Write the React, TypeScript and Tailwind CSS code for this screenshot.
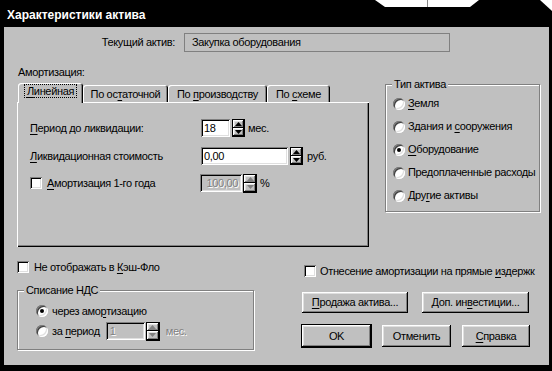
import React from "react";

const raised =
  "shadow-[inset_-1px_-1px_0_#000000,inset_1px_1px_0_#ffffff,inset_-2px_-2px_0_#808080,inset_2px_2px_0_#dfdfdf]";
const sunken =
  "shadow-[inset_1px_1px_0_#808080,inset_-1px_-1px_0_#ffffff,inset_2px_2px_0_#000000,inset_-2px_-2px_0_#dfdfdf]";

const U = ({ children }: { children: React.ReactNode }) => (
  <span className="underline decoration-1 underline-offset-[2px]">{children}</span>
);

function Tri({ up, disabled }: { up?: boolean; disabled?: boolean }) {
  return (
    <svg width="7" height="4" viewBox="0 0 7 4">
      <polygon
        points={up ? "0,4 3.5,0 7,4" : "0,0 3.5,4 7,0"}
        fill={disabled ? "#808080" : "#000000"}
      />
    </svg>
  );
}

function Spin({ w, h, disabled }: { w: string; h: string; disabled?: boolean }) {
  return (
    <div className={`${w} ${h} flex flex-col border border-black`}>
      <div className={`flex-1 bg-[#c0c0c0] flex items-center justify-center ${raised}`}>
        <Tri up disabled={disabled} />
      </div>
      <div className={`flex-1 bg-[#c0c0c0] flex items-center justify-center ${raised}`}>
        <Tri disabled={disabled} />
      </div>
    </div>
  );
}

function Check() {
  return <div className={`w-[12px] h-[12px] shrink-0 bg-white ${sunken}`} />;
}

function Radio({ on }: { on?: boolean }) {
  return (
    <div className="w-[12px] h-[12px] shrink-0 rounded-full bg-white shadow-[inset_1px_1px_0_#808080,inset_-1px_-1px_0_#ffffff,inset_2px_2px_0_#404040,inset_-2px_-2px_0_#dfdfdf] flex items-center justify-center">
      {on && <div className="w-[4px] h-[4px] rounded-full bg-black" />}
    </div>
  );
}

function Btn({ w, h, children, def }: { w: string; h: string; children: React.ReactNode; def?: boolean }) {
  return (
    <div
      className={`${w} ${h} bg-[#c0c0c0] flex items-center justify-center ${raised} ${
        def ? "outline outline-1 outline-black" : ""
      }`}
    >
      {children}
    </div>
  );
}

function Tab({ w, sel, children }: { w: string; sel?: boolean; children: React.ReactNode }) {
  return (
    <div
      className={`${w} ${
        sel ? "h-[20px] relative z-10" : "h-[18px]"
      } bg-[#c0c0c0] rounded-t-[3px] shadow-[inset_1px_1px_0_#ffffff,inset_-1px_0_0_#000000,inset_-2px_0_0_#808080] flex items-start justify-center pt-[2px]`}
    >
      {children}
    </div>
  );
}

export default function App() {
  return (
    <div className="w-[552px] h-[371px] bg-black overflow-hidden relative flex flex-col font-['Liberation_Sans',Arial,sans-serif]">
      <svg className="absolute left-0 top-0" width="552" height="12" viewBox="0 0 552 12">
        <polygon points="375,0 385,7 470,7 479,0" fill="#ffffff" />
        <line x1="427.5" y1="0" x2="427.5" y2="7" stroke="#888888" strokeWidth="1" />
        <polygon points="540,0 552,0 552,11" fill="#ffffff" />
      </svg>
      <div className="h-[27px] shrink-0 pl-[7px] pt-[3px] flex items-center text-white font-bold text-[12px]">
        Характеристики актива
      </div>
      <div className="ml-[4px] w-[545px] h-[338px] bg-[#c0c0c0] text-[11px] leading-[13px] tracking-[-0.35px] text-black pt-[6px]">
        {/* Current asset */}
        <div className="flex items-center h-[19px]">
          <div className="w-[171px] text-right">Текущий актив:</div>
          <div className="ml-[9px] w-[266px] h-[19px] border border-[#808080] flex items-center pl-[7px]">
            Закупка оборудования
          </div>
        </div>

        {/* Amortization + type */}
        <div className="flex mt-[14px]">
          <div className="ml-[13px] w-[352px] flex flex-col">
            <div className="h-[13px] pl-[1px]">Амортизация:</div>
            <div className="mt-[4px] h-[20px] flex items-end pl-[1px]">
              <Tab w="w-[65px]" sel>
                <span className="outline outline-1 outline-dotted outline-black px-[2px] leading-[12px]">
                  <U>Л</U>инейная
                </span>
              </Tab>
              <Tab w="w-[85px]">
                <span className="mt-[1px]">
                  По ос<U>т</U>аточной
                </span>
              </Tab>
              <Tab w="w-[99px]">
                <span className="mt-[1px]">
                  По <U>п</U>роизводству
                </span>
              </Tab>
              <Tab w="w-[63px]">
                <span className="mt-[1px]">
                  По <U>с</U>хеме
                </span>
              </Tab>
            </div>
            <div className="-mt-[1px] h-[145px] w-[352px] bg-[#c0c0c0] shadow-[inset_1px_1px_0_#ffffff,inset_-1px_-1px_0_#000000,inset_-2px_-2px_0_#808080] pt-[17px] pl-[13px]">
              <div className="flex items-center h-[18px]">
                <div className="w-[171px]">
                  <U>П</U>ериод до ликвидации:
                </div>
                <div className={`w-[29px] h-[18px] bg-white ${sunken} flex items-center pl-[3px]`}>18</div>
                <div className="ml-[2px]">
                  <Spin w="w-[13px]" h="h-[18px]" />
                </div>
                <div className="ml-[3px]">мес.</div>
              </div>
              <div className="flex items-center h-[18px] mt-[10px]">
                <div className="w-[171px]">
                  <U>Л</U>иквидационная стоимость
                </div>
                <div className={`w-[87px] h-[18px] bg-white ${sunken} flex items-center pl-[3px]`}>0,00</div>
                <div className="ml-[2px]">
                  <Spin w="w-[13px]" h="h-[18px]" />
                </div>
                <div className="ml-[4px]">руб.</div>
              </div>
              <div className="flex items-center h-[18px] mt-[9px]">
                <div className="w-[170px] flex items-center">
                  <Check />
                  <div className="ml-[5px]">
                    <U>А</U>мортизация 1-го года
                  </div>
                </div>
                <div
                  className={`w-[42px] h-[18px] bg-[#c0c0c0] ${sunken} flex items-center justify-end pr-[4px] text-[#808080] [text-shadow:1px_1px_0_#ffffff]`}
                >
                  100,00
                </div>
                <div className="ml-[1px]">
                  <Spin w="w-[14px]" h="h-[19px]" disabled />
                </div>
                <div className="ml-[3px]">%</div>
              </div>
            </div>
          </div>

          <div className="ml-[16px] mt-[18px] w-[155px] h-[128px] relative border border-[#808080] shadow-[1px_1px_0_#ffffff,inset_1px_1px_0_#ffffff] pt-[7px] pl-[7px]">
            <div className="absolute left-[6px] -top-[7px] px-[2px] bg-[#c0c0c0]">Тип актива</div>
            <div className="flex items-center h-[23px]">
              <Radio />
              <div className="ml-[3px]">
                <U>З</U>емля
              </div>
            </div>
            <div className="flex items-center h-[23px]">
              <Radio />
              <div className="ml-[3px]">
                Здания и <U>с</U>ооружения
              </div>
            </div>
            <div className="flex items-center h-[23px]">
              <Radio on />
              <div className="ml-[3px]">
                <U>О</U>борудование
              </div>
            </div>
            <div className="flex items-center h-[23px]">
              <Radio />
              <div className="ml-[3px] whitespace-nowrap">Предоплаченные расходы</div>
            </div>
            <div className="flex items-center h-[23px]">
              <Radio />
              <div className="ml-[3px]">
                Дру<U>г</U>ие активы
              </div>
            </div>
          </div>
        </div>

        {/* Bottom */}
        <div className="flex items-start">
          <div className="ml-[13px] mt-[14px] w-[237px] flex flex-col">
            <div className="flex items-center h-[12px]">
              <Check />
              <div className="ml-[5px]">
                Не отображать в <U>К</U>эш-Фло
              </div>
            </div>
            <div className="mt-[17px] h-[60px] w-[237px] relative border border-[#808080] shadow-[1px_1px_0_#ffffff,inset_1px_1px_0_#ffffff] pt-[10px] pl-[18px]">
              <div className="absolute left-[6px] -top-[7px] px-[2px] bg-[#c0c0c0]">Списание НДС</div>
              <div className="flex items-center h-[20px]">
                <Radio on />
                <div className="ml-[4px]">
                  через амо<U>р</U>тизацию
                </div>
              </div>
              <div className="flex items-center h-[20px]">
                <Radio />
                <div className="ml-[4px]">
                  за <U>п</U>ериод
                </div>
                <div
                  className={`ml-[6px] w-[39px] h-[18px] bg-[#c0c0c0] ${sunken} flex items-center pl-[4px] text-[#808080] [text-shadow:1px_1px_0_#ffffff]`}
                >
                  1
                </div>
                <div className="ml-[1px]">
                  <Spin w="w-[14px]" h="h-[19px]" disabled />
                </div>
                <div className="ml-[6px] text-[#808080] [text-shadow:1px_1px_0_#ffffff]">мес.</div>
              </div>
            </div>
          </div>

          <div className="ml-[48px] mt-[18px] flex flex-col">
            <div className="flex items-center h-[12px] pl-[2px]">
              <Check />
              <div className="ml-[4px] whitespace-nowrap">
                Отнесение амортизации на прямые <U>и</U>здержк
              </div>
            </div>
            <div className="flex mt-[15px]">
              <Btn w="w-[106px]" h="h-[21px]">
                <span>
                  <U>П</U>родажа актива...
                </span>
              </Btn>
              <div className="ml-[14px]">
                <Btn w="w-[107px]" h="h-[21px]">
                  <span>
                    Доп. ин<U>в</U>естиции...
                  </span>
                </Btn>
              </div>
            </div>
            <div className="flex mt-[12px]">
              <Btn w="w-[69px]" h="h-[22px]" def>
                OK
              </Btn>
              <div className="ml-[11px]">
                <Btn w="w-[69px]" h="h-[22px]">
                  Отменить
                </Btn>
              </div>
              <div className="ml-[11px]">
                <Btn w="w-[68px]" h="h-[22px]">
                  <span>
                    <U>С</U>правка
                  </span>
                </Btn>
              </div>
            </div>
          </div>
        </div>
      </div>
    </div>
  );
}
